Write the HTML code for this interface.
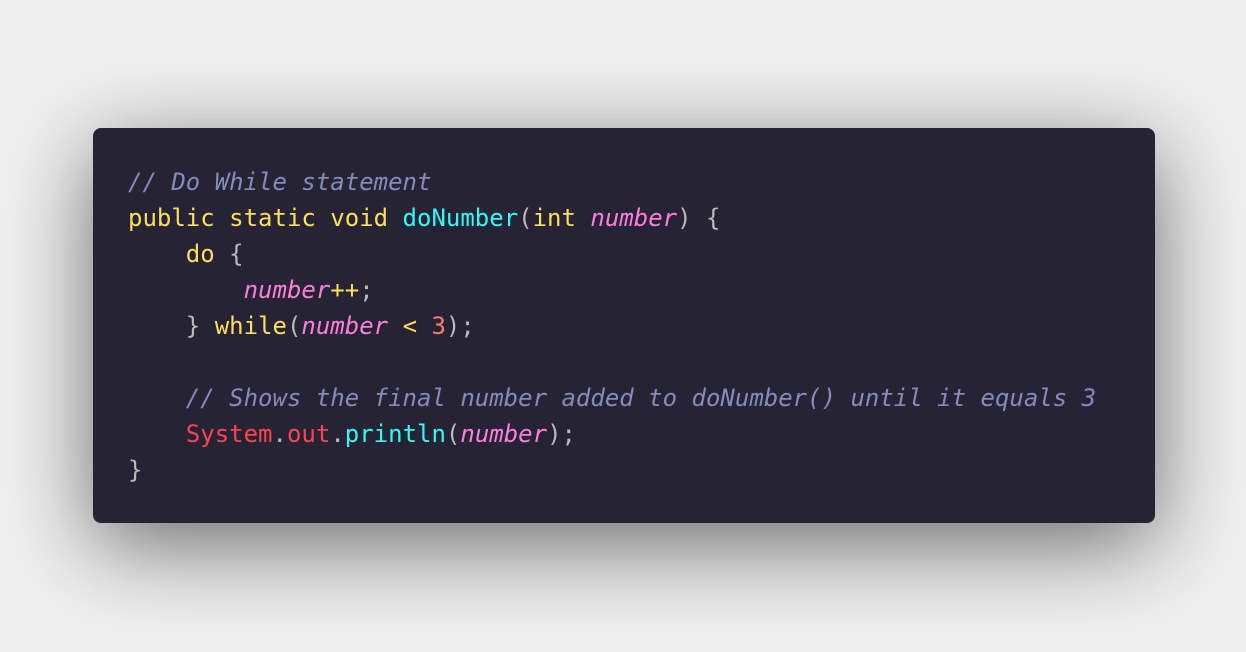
<!DOCTYPE html>
<html><head><style>
html,body{margin:0;padding:0;background:#efefef;width:1246px;height:652px;overflow:hidden}
.box{position:absolute;left:93px;top:128px;width:1062px;height:395px;background:#262335;border-radius:8px;box-shadow:0 22px 90px rgba(0,0,0,0.55)}
pre{position:absolute;left:35px;top:36px;margin:0;font-family:"DejaVu Sans Mono","Liberation Mono",monospace;font-size:24px;line-height:36px;color:#bbbbbb}
.c{color:#848bbd;font-style:italic}.k{color:#fede5d}.f{color:#36f9f6}.v{color:#ff7edb;font-style:italic}.n{color:#f97e72}.s{color:#fe4450}
</style></head><body>
<div class="box"><pre><span class="c">// Do While statement</span>
<span class="k">public static void</span> <span class="f">doNumber</span>(<span class="k">int</span> <span class="v">number</span>) {
    <span class="k">do</span> {
        <span class="v">number</span><span class="k">++</span>;
    } <span class="k">while</span>(<span class="v">number</span> <span class="k">&lt;</span> <span class="n">3</span>);

    <span class="c">// Shows the final number added to doNumber() until it equals 3</span>
    <span class="s">System</span>.<span class="s">out</span>.<span class="f">println</span>(<span class="v">number</span>);
}</pre></div>
</body></html>
